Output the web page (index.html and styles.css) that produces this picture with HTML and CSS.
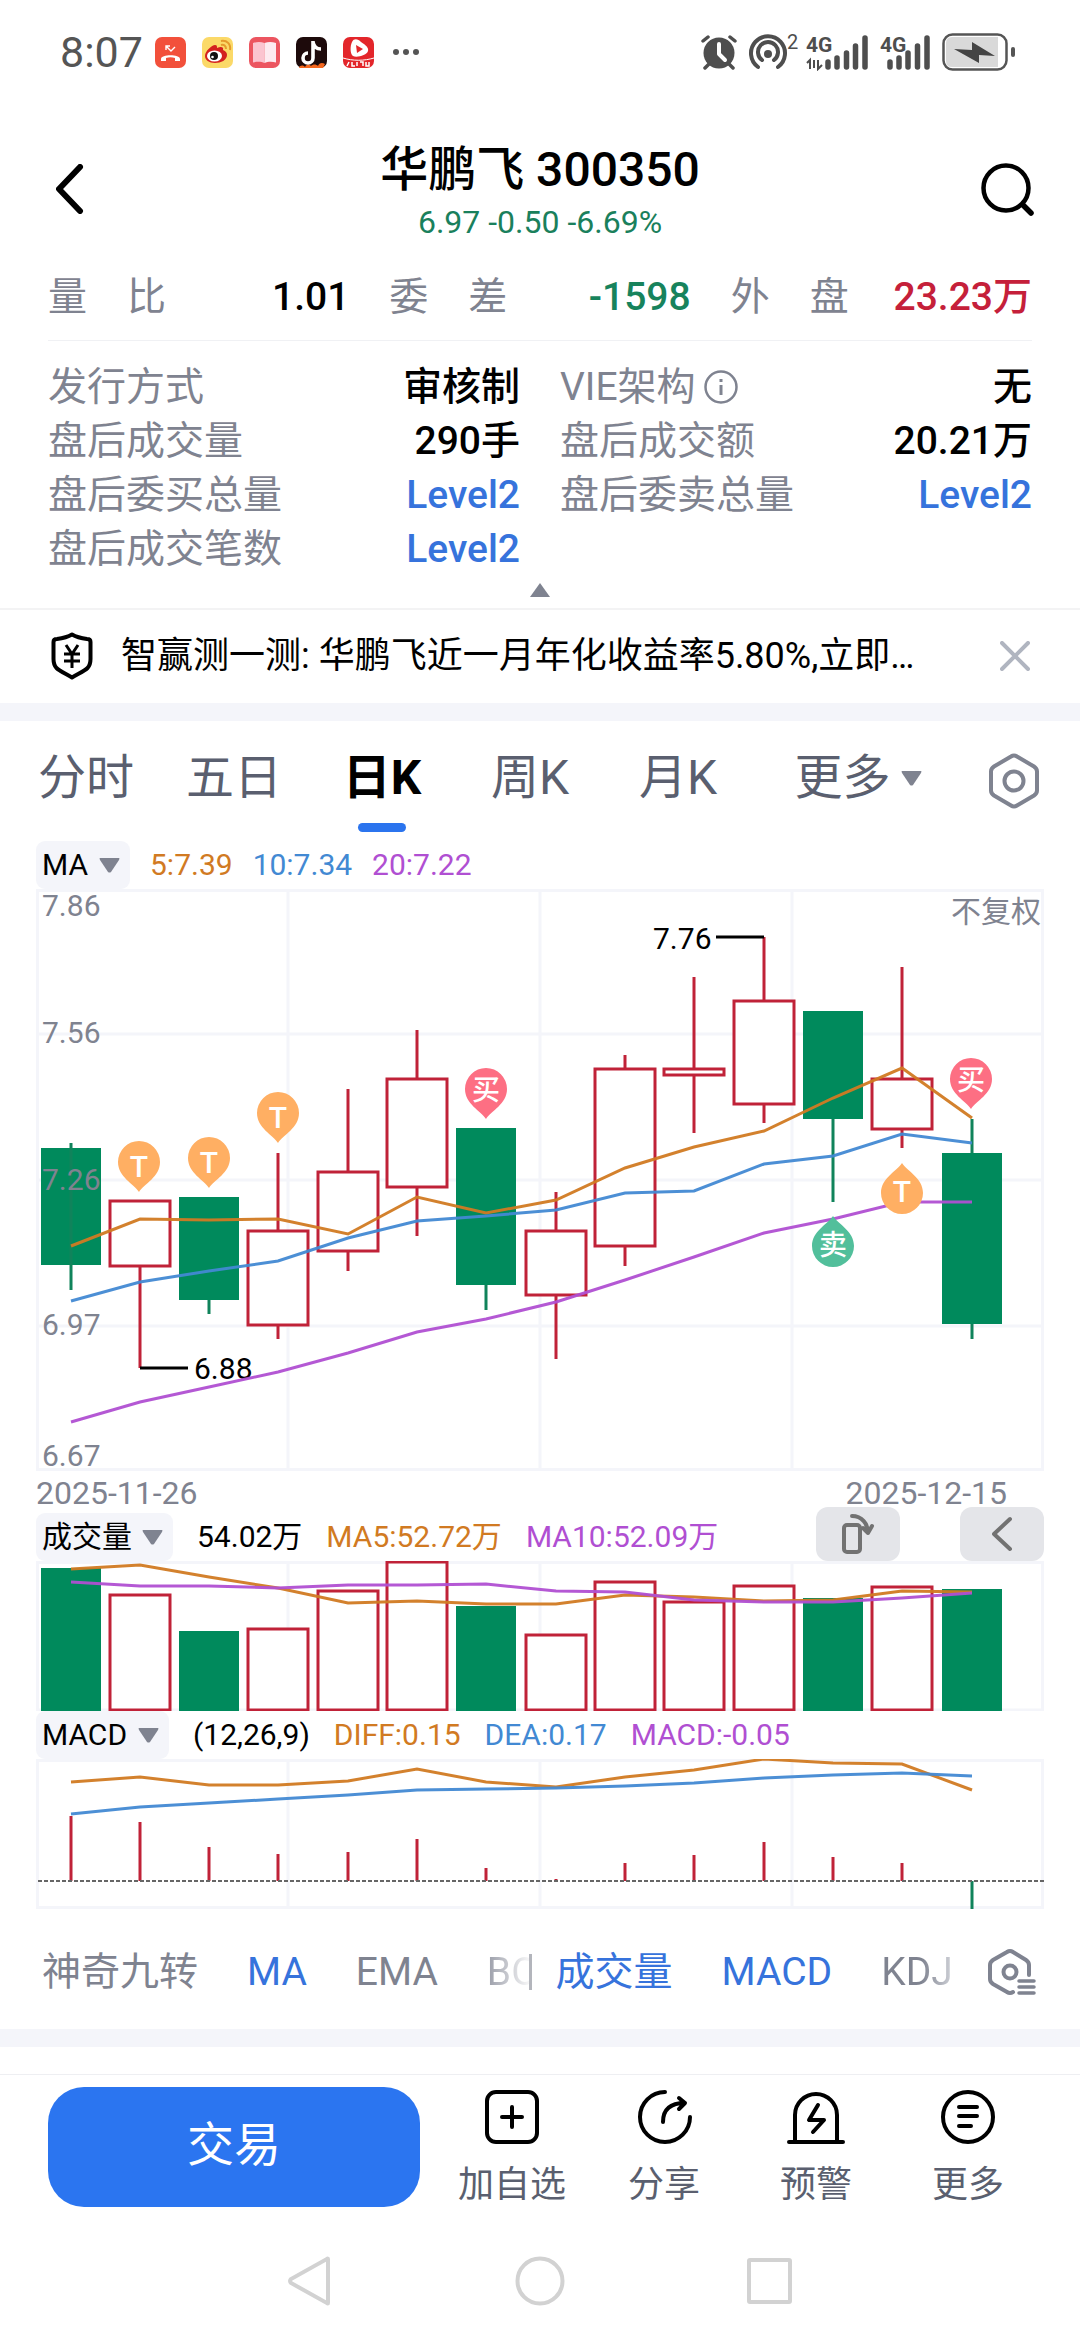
FILE: index.html
```html
<!DOCTYPE html>
<html lang="zh-CN">
<head>
<meta charset="utf-8">
<meta name="viewport" content="width=device-width, initial-scale=1">
<title>华鹏飞 300350</title>
<link rel="stylesheet" href="styles.css">
</head>
<body>
<div class="status">
  <time class="clock">8:07</time>
  <div class="apps">
    <svg width="31" height="31" viewBox="0 0 31 31"><rect width="31" height="31" rx="7" fill="#f2503b"/><path d="M6 22c0-5 19-5 19 0v2h-5v-3c-3-1-6-1-9 0v3H6z" fill="#fff"/><path d="M11 13v-4h4M11 9l5 5 4-4" stroke="#fff" stroke-width="1.4" fill="none"/></svg>
    <svg width="31" height="31" viewBox="0 0 31 31"><rect width="31" height="31" rx="7" fill="#fbd968"/><path d="M3 19c0-5 7-11 10-11 2 0 2 1 2 3 4-2 7-1 6 2 3 1 4 3 4 5 0 5-6 8-12 8S3 23 3 19z" fill="#d3201f"/><ellipse cx="12.500" cy="19" rx="7.500" ry="5.500" fill="#fff"/><circle cx="12" cy="19" r="4" fill="#111"/><circle cx="10.500" cy="20" r="1.300" fill="#fff"/><path d="M19 8c3-1 5 1 5 4M19 4c6-1 10 3 9 9" stroke="#e59a2c" stroke-width="2" fill="none"/></svg>
    <svg width="31" height="31" viewBox="0 0 31 31"><rect width="31" height="31" rx="7" fill="#ec5560"/><path d="M4 6c4-1.500 8-1.500 11.500 0v20c-3-1.500-8-1.500-11.500-.5z" fill="#fbc4d0"/><path d="M27 6c-4-1.500-8-1.500-11.500 0v20c3-1.500 8-1.500 11.500-.5z" fill="#fdeaf0"/></svg>
    <svg width="31" height="31" viewBox="0 0 31 31"><rect width="31" height="31" rx="7" fill="#1d0a0b"/><path d="M3 31c1-3 4-3 6-1 2-3 4-3 6-1 2-2 5-2 7 0 1-3 4-4 7-2l-2 4z" fill="#f4671f"/><path d="M17 4v17a5 5 0 1 1-5-5M17 5c1 5 4 7 8 7" stroke="#fff" stroke-width="3.600" fill="none"/></svg>
    <svg width="31" height="31" viewBox="0 0 31 31"><rect width="31" height="31" rx="7" fill="#e3262b"/><path d="M9 5c2-4 6-3 9 0 5 3 8 6 7 9-1 4-11 7-15 5-3-2-3-10-1-14z" fill="#fff"/><path d="M13 8l7 4-6 4z" fill="#e3262b"/><path d="M0 21c10 3 21 3 31 0" stroke="#fff" fill="none"/><path d="M6 25l-2 4M9 25v4h3M14 25v4M17 25h3v4M23 25v4h3v-4" stroke="#fff" stroke-width="1.500" fill="none"/></svg>
  </div>
  <svg class="dots" width="28" height="8" viewBox="0 0 28 8"><g fill="#555"><circle cx="4" cy="4" r="3"/><circle cx="14" cy="4" r="3"/><circle cx="24" cy="4" r="3"/></g></svg>
  <div class="signals">
    <svg width="36" height="36" viewBox="0 0 36 36"><circle cx="18" cy="19" r="15.500" fill="#4e4e4e"/><path d="M2 7l5-4M34 7l-5-4M8 30l-4 4M28 30l4 4" stroke="#4e4e4e" stroke-width="3.500" stroke-linecap="round"/><path d="M18 10v10l6 6" stroke="#fff" stroke-width="4" fill="none" stroke-linecap="round" stroke-linejoin="round"/></svg>
    <svg class="hotspot" width="45" height="38" viewBox="0 0 45 38"><g fill="none" stroke="#4e4e4e" stroke-width="4" stroke-linecap="round"><path d="M9 34a17 17 0 1 1 20 0"/><path d="M13 27a10 10 0 1 1 12 0"/></g><circle cx="19" cy="21" r="4" fill="#4e4e4e"/><text x="38" y="16" class="sup">2</text></svg>
    <svg width="62" height="38" viewBox="0 0 62 38"><text x="0" y="19" class="net">4G</text><path d="M4 36V27l-3 3M8 27v8M12 27v9l4-4" stroke="#4e4e4e" stroke-width="2" fill="none"/><path d="M22 29v5M31 25v9M40.500 20v14M49.500 13v21M59 5v29" stroke="#4e4e4e" stroke-width="5.500" stroke-linecap="round"/></svg>
    <svg width="50" height="38" viewBox="0 0 50 38"><text x="0" y="19" class="net">4G</text><path d="M10 29v5M19 25v9M28 20v14M37.500 13v21M47 5v29" stroke="#4e4e4e" stroke-width="5.500" stroke-linecap="round"/></svg>
    <svg width="73" height="38" viewBox="0 0 73 38"><rect x="1.500" y="1.500" width="63" height="35" rx="9" fill="#fff" stroke="#555" stroke-width="2.500"/><path d="M10 4h46v30H10q-6 0-6-6V10q0-6 6-6z" fill="#d9d9d9"/><path d="M12 16l18 1V9l23 14-16-1v8z" fill="#444"/><rect x="69" y="14" width="4" height="10" rx="2" fill="#555"/></svg>
  </div>
</div>

<header class="head">
  <button class="icon-btn" aria-label="返回"><svg width="28" height="50" viewBox="0 0 28 50"><path d="M24 3L3 25l21 22" fill="none" stroke="#000" stroke-width="6" stroke-linecap="round" stroke-linejoin="round"/></svg></button>
  <div class="heading">
    <h1>华鹏飞 300350</h1>
    <p class="quote">6.97 -0.50 -6.69%</p>
  </div>
  <button class="icon-btn" aria-label="搜索"><svg width="53" height="53" viewBox="0 0 53 53"><circle cx="25" cy="25" r="22.500" fill="none" stroke="#000" stroke-width="4.500"/><path d="M42 42l8 8" stroke="#000" stroke-width="5.500" stroke-linecap="round"/></svg></button>
</header>

<section class="facts">
  <dl class="row three">
    <div><dt class="spread">量比</dt><dd>1.01</dd></div>
    <div><dt class="spread">委差</dt><dd class="down">-1598</dd></div>
    <div><dt class="spread">外盘</dt><dd class="up">23.23万</dd></div>
  </dl>
  <dl class="row two">
    <div><dt>发行方式</dt><dd>审核制</dd></div>
    <div><dt>VIE架构<svg class="info" width="34" height="34" viewBox="0 0 34 34"><circle cx="17" cy="17" r="15.500" fill="none" stroke="#7f8390" stroke-width="2.500"/><path d="M17 15v10M17 9v3" stroke="#7f8390" stroke-width="3"/></svg></dt><dd>无</dd></div>
    <div><dt>盘后成交量</dt><dd>290手</dd></div>
    <div><dt>盘后成交额</dt><dd>20.21万</dd></div>
    <div><dt>盘后委买总量</dt><dd><a href="#level2">Level2</a></dd></div>
    <div><dt>盘后委卖总量</dt><dd><a href="#level2">Level2</a></dd></div>
    <div><dt>盘后成交笔数</dt><dd><a href="#level2">Level2</a></dd></div>
  </dl>
  <button class="fold" aria-label="收起"><svg width="20" height="14" viewBox="0 0 20 14"><path d="M10 0L20 14H0z" fill="#7f8390"/></svg></button>
</section>

<aside class="promo">
  <svg width="42" height="48" viewBox="0 0 42 48"><path d="M21 2.500c5 3 11 4 15 4.500 2 0 3.500 1 3.500 3v17c0 3-1 7-3 9-3 3-10 6-15.500 9.500C15.500 42 8.500 39 5.500 36c-2-2-3-6-3-9V10c0-2 1.500-3 3.500-3 4-.5 10-1.500 15-4.500z" fill="none" stroke="#000" stroke-width="4" stroke-linejoin="round"/><path d="M15 13l6 9 6-9M21 22v14M13 22h16M13 29h16" fill="none" stroke="#000" stroke-width="3"/></svg>
  <a class="promo-text" href="#promo">智赢测一测: 华鹏飞近一月年化收益率5.80%,立即…</a>
  <button class="icon-btn" aria-label="关闭"><svg width="30" height="30" viewBox="0 0 30 30"><path d="M2 2l26 26M28 2L2 28" stroke="#b0b5c0" stroke-width="4" stroke-linecap="round"/></svg></button>
</aside>

<main class="board">
  <nav class="tabs">
    <button>分时</button>
    <button>五日</button>
    <button class="on">日K</button>
    <button>周K</button>
    <button>月K</button>
    <button><span class="more">更多<svg width="21" height="15" viewBox="0 0 21 15"><path d="M1 0h19q1 0 0 2l-8 12q-1.500 1-3 0L1 2Q0 0 1 0z" fill="#7f8390"/></svg></span></button>
    <button class="gear" aria-label="设置"><svg width="50" height="56" viewBox="0 0 50 56"><path d="M22 3.500q3-2 6 0l17 10q3 2 3 5v19q0 3-3 5l-17 10q-3 2-6 0l-17-10q-3-2-3-5v-19q0-3 3-5z" fill="none" stroke="#7f8390" stroke-width="4"/><circle cx="25" cy="28" r="9.500" fill="none" stroke="#7f8390" stroke-width="4"/></svg></button>
  </nav>

  <div class="legend tight">
    <div class="picker"><select aria-label="主图指标"><option>MA</option></select><svg width="21" height="15" viewBox="0 0 21 15"><path d="M1 0h19q1 0 0 2l-8 12q-1.500 1-3 0L1 2Q0 0 1 0z" fill="#7f8390"/></svg></div>
    <span class="c-orange">5:7.39</span><span class="c-blue">10:7.34</span><span class="c-purple">20:7.22</span>
  </div>
  <svg class="plot price" viewBox="0 0 1008 582" role="img" aria-label="日K线">
    <path class="grid" d="M1.500 1.500H1006.500V580.500H1.500zM252 1V581M504 1V581M756 1V581M1 145H1007M1 291H1007M1 437H1007"/>
    <g class="down-bar">
      <rect x="5" y="259" width="60" height="117"/><rect x="143" y="308" width="60" height="103"/><rect x="420" y="239" width="60" height="157"/><rect x="767" y="122" width="60" height="108"/><rect x="906" y="264" width="60" height="171"/>
    </g>
    <path class="down-wick" d="M35 254V401M173 411V425M450 396V421M797 230V313M936 230V264M936 435V450"/>
    <path class="up-wick" d="M104 378V479M242 264V341M242 437V450M312 200V282M312 363V382M381 141V189M381 299V347M520 303V341M520 407V470M589 166V179M589 358V377M658 88V179M658 187V244M728 48V111M728 216V234M866 78V189M866 241V259"/>
    <g class="up-bar">
      <rect x="74" y="312" width="60" height="65"/><rect x="212" y="342" width="60" height="94"/><rect x="282" y="283" width="60" height="79"/><rect x="351" y="190" width="60" height="108"/><rect x="490" y="342" width="60" height="64"/><rect x="559" y="180" width="60" height="177"/><rect x="628" y="180" width="60" height="6"/><rect x="698" y="112" width="60" height="103"/><rect x="836" y="190" width="60" height="50"/>
    </g>
    <g class="axis"><text x="6" y="27">7.86</text><text x="6" y="154">7.56</text><text x="6" y="301">7.26</text><text x="6" y="446">6.97</text><text x="6" y="577">6.67</text><text x="1005" y="33" text-anchor="end">不复权</text></g>
    <g class="mark"><text x="617" y="60">7.76</text><text x="158" y="490">6.88</text><path d="M680 48H728M104 479H152"/></g>
    <polyline class="line c-orange" points="35,357 104,330 173,331 242,330 312,345 381,308 450,324 520,311 589,279 658,258 728,242 797,209 866,179 936,229"/>
    <polyline class="line c-blue" points="35,412 104,393 173,382 242,372 312,349 381,332 450,327 520,321 589,304 658,302 728,275 797,267 866,245 936,254"/>
    <polyline class="line c-purple" points="35,533 104,513 173,498 242,483 312,464 381,443 450,430 520,413 589,391 658,368 728,344 797,330 866,313 936,313"/>
    <defs><path id="pin" d="M0 51C-5 43-21 36-21 21A21 21 0 1 1 21 21C21 36 5 43 0 51z"/></defs>
    <g class="pins">
      <use href="#pin" x="103" y="252" fill="#ffaf63"/><use href="#pin" x="173" y="248" fill="#ffaf63"/><use href="#pin" x="242" y="203" fill="#ffaf63"/>
      <use href="#pin" x="450" y="179" fill="#fd6f83"/><use href="#pin" x="935" y="169" fill="#fd6f83"/>
      <use href="#pin" transform="translate(866 325) scale(1 -1)" fill="#ffaf63"/><use href="#pin" transform="translate(797 378) scale(1 -1)" fill="#52bf9b"/>
      <text x="103" y="288">T</text><text x="173" y="284">T</text><text x="242" y="239">T</text><text x="866" y="313">T</text>
      <text class="cn" x="450" y="211">买</text><text class="cn" x="935" y="201">买</text><text class="cn" x="797" y="366">卖</text>
    </g>
  </svg>
  <div class="dates"><time>2025-11-26</time><time>2025-12-15</time></div>

  <div class="legend volume">
    <div class="picker"><select aria-label="副图一"><option>成交量</option></select><svg width="21" height="15" viewBox="0 0 21 15"><path d="M1 0h19q1 0 0 2l-8 12q-1.500 1-3 0L1 2Q0 0 1 0z" fill="#7f8390"/></svg></div>
    <span>54.02万</span><span class="c-orange">MA5:52.72万</span><span class="c-purple">MA10:52.09万</span>
    <div class="tools">
      <button aria-label="横屏"><svg width="36" height="42" viewBox="0 0 36 42"><rect x="4" y="12" width="16" height="27" rx="3" fill="none" stroke="#727272" stroke-width="4"/><path d="M12 3c10 0 16 8 16 17M32 13l-4 7-5-5" fill="none" stroke="#727272" stroke-width="4" stroke-linecap="round" stroke-linejoin="round"/></svg></button>
      <button aria-label="展开"><svg width="20" height="36" viewBox="0 0 20 36"><path d="M18 3L2 18l16 15" fill="none" stroke="#727272" stroke-width="4" stroke-linecap="round" stroke-linejoin="round"/></svg></button>
    </div>
  </div>
  <svg class="plot" viewBox="0 0 1008 150" role="img" aria-label="成交量">
    <path class="grid" d="M1.500 1.500H1006.500V149H1.500zM252 1V149M504 1V149M756 1V149"/>
    <g class="down-bar"><rect x="5" y="7" width="60" height="143"/><rect x="143" y="70" width="60" height="80"/><rect x="420" y="45" width="60" height="105"/><rect x="767" y="37" width="60" height="113"/><rect x="906" y="28" width="60" height="122"/></g>
    <g class="up-bar"><rect x="74" y="34" width="60" height="115"/><rect x="212" y="68" width="60" height="81"/><rect x="282" y="30" width="60" height="119"/><rect x="351" y="1" width="60" height="148"/><rect x="490" y="74" width="60" height="75"/><rect x="559" y="21" width="60" height="128"/><rect x="628" y="41" width="60" height="108"/><rect x="698" y="25" width="60" height="124"/><rect x="836" y="26" width="60" height="123"/></g>
    <polyline class="line c-orange" points="35,8 104,4 173,16 242,27 312,42 381,40 450,43 520,43 589,34 658,36 728,40 797,39 866,30 936,31"/>
    <polyline class="line c-purple" points="35,21 104,25 173,25 242,27 312,24 381,24 450,23 520,30 589,31 658,39 728,41 797,41 866,37 936,32"/>
  </svg>

  <div class="legend">
    <div class="picker"><select aria-label="副图二"><option>MACD</option></select><svg width="21" height="15" viewBox="0 0 21 15"><path d="M1 0h19q1 0 0 2l-8 12q-1.500 1-3 0L1 2Q0 0 1 0z" fill="#7f8390"/></svg></div>
    <span>(12,26,9)</span><span class="c-orange">DIFF:0.15</span><span class="c-blue">DEA:0.17</span><span class="c-purple">MACD:-0.05</span>
  </div>
  <svg class="plot" viewBox="0 0 1008 150" role="img" aria-label="MACD">
    <path class="grid" d="M1.500 1.500H1006.500V148.500H1.500zM252 1V149M504 1V149M756 1V149"/>
    <path class="up-wick" d="M35 57V122M104 63V122M173 88V122M242 95V122M312 93V122M381 80V122M450 109V122M520 120V122M589 104V122M658 96V122M728 83V122M797 98V122M866 104V122"/>
    <path class="down-wick" d="M936 122V150"/>
    <path d="M2 122H1008" stroke="#666" stroke-width="2" stroke-dasharray="4 2"/>
    <polyline class="line c-orange" points="35,23 104,18 173,26 242,26 312,22 381,10 450,23 520,28 589,18 658,11 728,0 797,4 866,5 936,31"/>
    <polyline class="line c-blue" points="35,55 104,48 173,44 242,40 312,36 381,31 450,30 520,29 589,27 658,24 728,19 797,16 866,14 936,17"/>
  </svg>

  <nav class="indicators">
    <div class="group main-group"><button>神奇九转</button><button class="on">MA</button><button>EMA</button><button class="fade">BO</button></div>
    <span class="divider"></span>
    <div class="group sub-group"><button class="on">成交量</button><button class="on">MACD</button><button class="fade late">KDJ</button></div>
    <button class="icon-btn" aria-label="指标设置"><svg width="48" height="48" viewBox="0 0 48 48"><g fill="none" stroke="#7f8390" stroke-width="4" stroke-linecap="round"><path d="M41 27V17q0-3-3-5L25 4q-3-2-6 0L5 12q-3 2-3 5v14q0 3 3 5l14 8q3 2 6 0"/><circle cx="22" cy="24" r="6.500"/><path d="M31 33h15M31 39h15M31 45h15" stroke-width="3.500"/></g></svg></button>
  </nav>
</main>

<footer class="bar">
  <button class="trade">交易</button>
  <div class="actions">
    <button><svg width="58" height="54" viewBox="0 0 58 54"><rect x="4" y="2" width="50" height="50" rx="9"/><path d="M29 17v20M19 27h20"/></svg>加自选</button>
    <button><svg width="58" height="54" viewBox="0 0 58 54"><path d="M30 2a25 25 0 1 0 25 25M28 32c0-13 8-19 22-19M44 8l6 5-6 6"/></svg>分享</button>
    <button><svg width="58" height="54" viewBox="0 0 58 54"><path d="M2 52h54M8 51V25a21 21 0 0 1 42 0v26M31 15l-9 15h15l-11 12"/></svg>预警</button>
    <button><svg width="58" height="54" viewBox="0 0 58 54"><circle cx="29" cy="27" r="25"/><path d="M20 17h18M20 26h18M20 36h12"/></svg>更多</button>
  </div>
</footer>
<nav class="system">
  <button class="icon-btn" aria-label="后退"><svg width="50" height="50" viewBox="0 0 50 50"><path d="M42 3v44q0 1-1 0L5 27q-2-2 0-4L41 3q1-1 1 0z"/></svg></button>
  <button class="icon-btn" aria-label="主屏幕"><svg width="50" height="50" viewBox="0 0 50 50"><circle cx="25" cy="25" r="22.500"/></svg></button>
  <button class="icon-btn" aria-label="最近任务"><svg width="50" height="50" viewBox="0 0 50 50"><rect x="5" y="4" width="41" height="42" rx="1"/></svg></button>
</nav>
</body>
</html>
```
FILE: styles.css
```css
* { box-sizing: border-box; }
body {
  margin: 0;
  background: #fff;
  color: #000;
  font-family: Roboto, "Noto Sans CJK SC", sans-serif;
  font-size: 30px;
}
button, select {
  margin: 0;
  padding: 0;
  border: 0;
  background: none;
  color: inherit;
  font: inherit;
}
svg { display: block; flex: none; }
a { color: #3673dc; text-decoration: none; }
h1, p, dl, dd { margin: 0; }
.c-orange { color: #d17a22; }
.c-blue { color: #4289d3; }
.c-purple { color: #b04fd2; }
.icon-btn { display: flex; }

/* status bar */
.status {
  display: flex;
  align-items: center;
  height: 72px;
  padding: 32px 65px 0 60px;
  color: #555;
}
.clock { font-size: 43px; line-height: 40px; }
.apps { display: flex; gap: 16px; margin-left: 12px; }
.dots { margin-left: 18px; }
.signals { display: flex; align-items: center; gap: 12px; margin-left: auto; }
.hotspot { overflow: visible; }
.net { font-size: 21px; font-weight: 700; fill: #4e4e4e; }
.sup { font-size: 20px; fill: #4e4e4e; }

/* title */
.head {
  display: grid;
  grid-template-columns: 53px 1fr 53px;
  align-items: center;
  padding: 64px 46px 0 56px;
}
.heading { padding: 4px 10px 0 0; text-align: center; }
h1 { font-size: 48px; font-weight: 500; line-height: 60px; }
.quote { margin-top: 2px; color: #1a805c; font-size: 32px; line-height: 40px; }

/* figures */
.facts { padding: 28px 48px 0; border-bottom: 2px solid #f3f3f4; }
.row { display: grid; column-gap: 40px; font-size: 39px; line-height: 54px; }
.row > div { display: flex; justify-content: space-between; }
.three { grid-template-columns: repeat(3, 1fr); padding-bottom: 16px; border-bottom: 1px solid #f0f1f4; }
.two { grid-template-columns: repeat(2, 1fr); padding-top: 19px; }
dt { display: flex; align-items: center; color: #7f8390; }
dt.spread { display: block; width: 118px; text-align: justify; text-align-last: justify; }
dd { font-weight: 500; }
.up { color: #c5203a; }
.down { color: #17835c; }
.info { margin-left: 8px; }
.fold { display: block; margin: 7px auto 11px; }

.promo {
  display: flex;
  align-items: center;
  padding: 22px 50px 23px 51px;
  border-bottom: 18px solid #f4f5fa;
}
.promo-text { flex: 1; margin-left: 28px; color: #000; font-size: 36px; line-height: 48px; white-space: nowrap; }

/* period tabs */
.board { border-bottom: 18px solid #f4f5fa; }
.tabs {
  display: grid;
  grid-template-columns: repeat(5, 148fr) 212fr 100fr;
  padding: 29px 16px 9px 12px;
}
.tabs button {
  display: flex;
  flex-direction: column;
  align-items: center;
  gap: 17px;
  color: #5a5f6f;
  font-size: 48px;
  line-height: 56px;
}
.tabs button::after { content: ""; width: 48px; height: 9px; border-radius: 5px; }
.tabs .on { color: #000; font-weight: 700; }
.tabs .on::after { background: #2b74ee; }
.tabs .gear { padding-top: 3px; }
.tabs .gear::after { display: none; }
.more { display: flex; align-items: center; gap: 10px; }

/* charts */
.legend {
  display: flex;
  align-items: center;
  gap: 24px;
  height: 48px;
  padding: 0 36px;
  line-height: 48px;
  white-space: nowrap;
}
.legend.tight { gap: 20px; }
.picker {
  display: flex;
  align-items: center;
  gap: 10px;
  padding: 0 10px 0 6px;
  border-radius: 9px;
  background: #f4f5fa;
}
.picker select { height: 48px; appearance: none; }
.picker svg { pointer-events: none; }
.tools { display: flex; align-self: flex-end; gap: 60px; margin-left: auto; }
.tools button {
  display: flex;
  align-items: center;
  justify-content: center;
  width: 84px;
  height: 54px;
  border-radius: 12px;
  background: #e4e5e9;
}
.plot { width: calc(100% - 72px); height: auto; margin: 0 36px; }
.price { overflow: visible; }
.dates {
  display: flex;
  justify-content: space-between;
  padding: 2px 73px 0 36px;
  color: #7f8390;
  font-size: 32px;
  line-height: 40px;
}
.grid { fill: none; stroke: #f4f5fa; stroke-width: 3; }
.down-bar { fill: #008a5c; }
.up-bar { fill: #fff; stroke: #c02238; stroke-width: 3; }
.down-wick { stroke: #10835b; stroke-width: 3; }
.up-wick { stroke: #c02238; stroke-width: 3; }
.line { fill: none; stroke: currentColor; stroke-width: 3; stroke-opacity: .95; }
.axis { fill: #7f8390; }
.mark { fill: #000; stroke-width: 3; }
.mark path { stroke: #000; }
.pins { text-anchor: middle; font-size: 30px; font-weight: 500; }
.pins text { fill: #fff; }
.pins .cn { font-size: 28px; }

/* indicator strip */
.indicators {
  display: flex;
  align-items: center;
  padding: 35px 44px 29px 42px;
  color: #7f8390;
}
.group { display: flex; min-width: 0; overflow: hidden; gap: 49px; font-size: 39px; line-height: 56px; white-space: nowrap; }
.group .on { color: #3673dc; }
.main-group { flex: 486; }
.divider { flex: none; width: 3px; height: 36px; background: #b3b5bc; }
.sub-group { flex: 394; margin-left: 24px; }
.group .fade { color: transparent; background: linear-gradient(90deg, #9a9da8, #fff 46px); background-clip: text; }
.group .late { background-image: linear-gradient(90deg, #7f8390 40px, #d0d2d8); }
.indicators .icon-btn { margin-left: 38px; }

/* bottom bar */
.bar {
  display: flex;
  align-items: flex-end;
  gap: 16px;
  margin-top: 27px;
  padding: 12px 36px 0 48px;
  border-top: 1px solid #eeeff2;
}
.trade {
  flex: 372;
  height: 120px;
  padding-bottom: 4px;
  border-radius: 36px;
  background: #2b75f0;
  color: #fff;
  font-size: 47px;
  line-height: 56px;
}
.actions { display: grid; flex: 608; grid-template-columns: repeat(4, 1fr); }
.actions button {
  display: flex;
  flex-direction: column;
  align-items: center;
  gap: 19px;
  color: #5a5f6f;
  font-size: 36px;
  line-height: 44px;
}
.actions svg { fill: none; stroke: #000; stroke-width: 4; stroke-linecap: round; stroke-linejoin: round; }
.system { display: flex; justify-content: center; gap: 179px; padding: 49px 0 34px; }
.system svg { fill: none; stroke: #d2d2d2; stroke-width: 4; }
```
